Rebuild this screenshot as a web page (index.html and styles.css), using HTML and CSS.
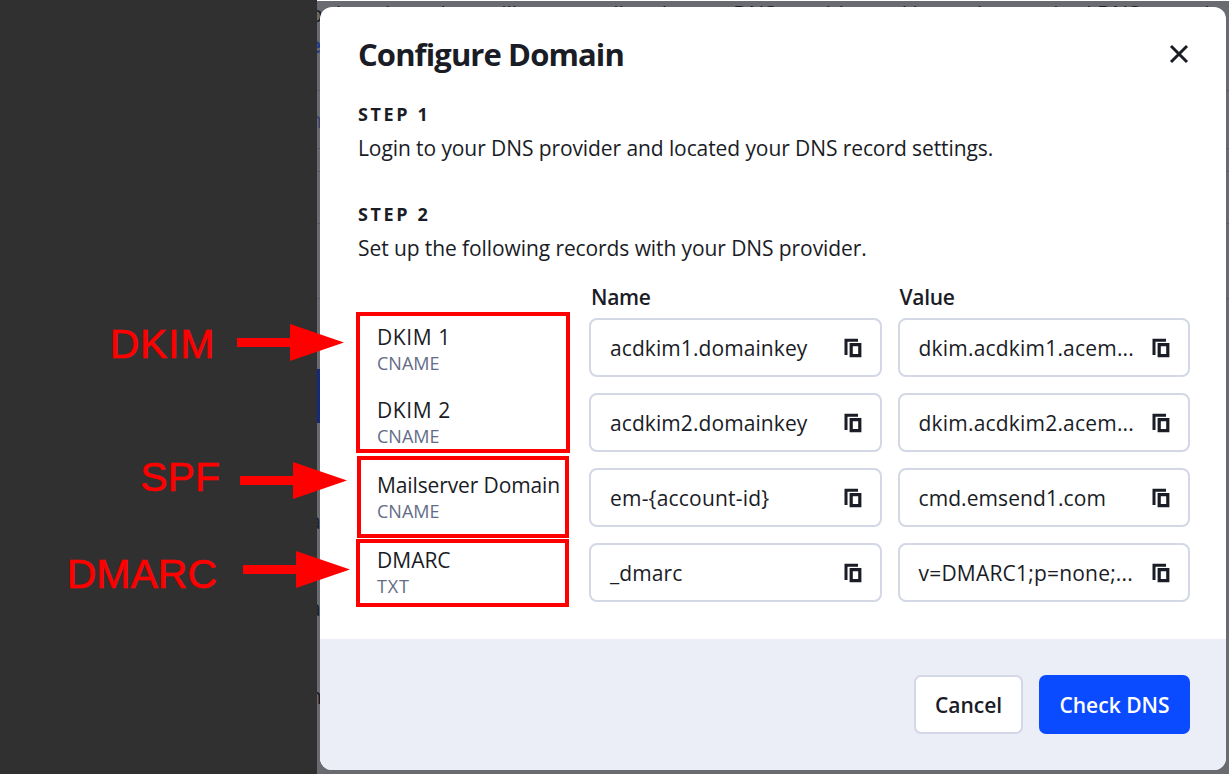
FILE: index.html
```html
<!DOCTYPE html>
<html lang="en">
<head>
    <meta charset="UTF-8">
    <meta name="viewport" content="width=device-width, initial-scale=1.0">
    <title>Configure Domain</title>
    <link rel="stylesheet" href="styles.css">
</head>
<body>
    <svg class="icon-defs" width="0" height="0">
        <symbol id="copy" viewBox="0 0 18 20">
            <path d="M2 17V2.2H14" fill="none" stroke="currentColor" stroke-width="3"/>
            <path d="M7.2 6.7h8.6v11H7.2z" fill="none" stroke="currentColor" stroke-width="3.2"/>
        </symbol>
        <symbol id="arrow" viewBox="0 0 107 37">
            <path d="M0 14h53V0l54 18.5L53 37V23H0z" fill="#f00"/>
        </symbol>
    </svg>

    <aside class="notes"></aside>

    <div class="backdrop">
        <div class="page-line">p domain and we will connect directly your DNS provider and input the required DNS records</div>
        <span class="page-text link">e</span>
        <span class="page-text muted">n</span>
        <i class="rule rule-1"></i>
        <i class="rule rule-2"></i>
        <i class="rule rule-3"></i>
        <i class="rule rule-4"></i>
        <i class="rule rule-5"></i>
        <i class="page-button"></i>
        <span class="page-text text-1">a</span>
        <span class="page-text text-2">a</span>
        <span class="page-text text-3">n</span>

        <div class="modal">
            <div class="modal-body">
                <div class="modal-header">
                    <h1>Configure Domain</h1>
                    <button class="close" aria-label="Close">
                        <svg width="20" height="20" viewBox="0 0 20 20">
                            <path d="M2 2l16 16M18 2L2 18" stroke="currentColor" stroke-width="3"/>
                        </svg>
                    </button>
                </div>

                <div class="step">
                    <h2>STEP 1</h2>
                    <p>Login to your DNS provider and located your DNS record settings.</p>
                </div>
                <div class="step">
                    <h2>STEP 2</h2>
                    <p>Set up the following records with your DNS provider.</p>
                </div>

                <div class="records">
                    <div class="column-title"></div>
                    <div class="column-title">Name</div>
                    <div class="column-title">Value</div>

                    <div class="record first"><div class="record-name dkim">DKIM 1</div><div class="record-type">CNAME</div></div>
                    <div class="field"><span>acdkim1.domainkey</span><svg class="copy"><use href="#copy"/></svg></div>
                    <div class="field"><span class="wide">dkim.acdkim1.acem...</span><svg class="copy"><use href="#copy"/></svg></div>

                    <div class="record"><div class="record-name dkim">DKIM 2</div><div class="record-type">CNAME</div></div>
                    <div class="field"><span>acdkim2.domainkey</span><svg class="copy"><use href="#copy"/></svg></div>
                    <div class="field"><span class="wide">dkim.acdkim2.acem...</span><svg class="copy"><use href="#copy"/></svg></div>

                    <div class="record"><div class="record-name mailserver">Mailserver Domain</div><div class="record-type">CNAME</div></div>
                    <div class="field"><span class="wide">em-{account-id}</span><svg class="copy"><use href="#copy"/></svg></div>
                    <div class="field"><span>cmd.emsend1.com</span><svg class="copy"><use href="#copy"/></svg></div>

                    <div class="record"><div class="record-name">DMARC</div><div class="record-type txt">TXT</div></div>
                    <div class="field"><span>_dmarc</span><svg class="copy"><use href="#copy"/></svg></div>
                    <div class="field"><span class="wide">v=DMARC1;p=none;...</span><svg class="copy"><use href="#copy"/></svg></div>
                </div>
            </div>

            <div class="modal-footer">
                <button class="btn cancel">Cancel</button>
                <button class="btn check">Check DNS</button>
            </div>
        </div>
    </div>

    <!-- Callouts drawn over the dialog -->
    <div class="box box-dkim"></div>
    <div class="box box-spf"></div>
    <div class="box box-dmarc"></div>
    <div class="callout callout-dkim"><span>DKIM</span><svg class="arrow"><use href="#arrow"/></svg></div>
    <div class="callout callout-spf"><span>SPF</span><svg class="arrow"><use href="#arrow"/></svg></div>
    <div class="callout callout-dmarc"><span>DMARC</span><svg class="arrow"><use href="#arrow"/></svg></div>
</body>
</html>
```
FILE: styles.css
```css
* {
    box-sizing: border-box;
}
body {
    margin: 0;
    height: 774px;
    display: flex;
    position: relative;
    overflow: hidden;
    font-family: "Open Sans", "Noto Sans", sans-serif;
    font-size: 21px;
    color: #1a1c26;
    background-color: #303030;
}
h1, h2, p {
    margin: 0;
}
button {
    font-family: inherit;
    cursor: pointer;
}
.icon-defs {
    position: absolute;
}
.notes {
    width: 317px;
    flex: none;
    background-color: #303030;
}
.backdrop {
    position: relative;
    flex: 1;
    overflow: hidden;
    padding: 6px 3px 4px;
    border-top: 1px solid #fff;
    background-color: #6a6b70;
}

/* Page behind the dialog */
.page-line {
    position: absolute;
    top: -1px;
    left: -7px;
    font-size: 21px;
    line-height: 28px;
    white-space: nowrap;
    color: #1c1d26;
}
.page-text {
    position: absolute;
    left: -8px;
    font-size: 21px;
    line-height: 28px;
    color: #1c1d26;
}
.link {
    top: 30px;
    color: #1c3a94;
    font-weight: 600;
}
.muted {
    top: 105px;
    color: #3a4570;
}
.text-1 {
    top: 506px;
}
.text-2 {
    top: 593px;
}
.text-3 {
    top: 681px;
}
.rule {
    position: absolute;
    left: 0;
    right: 0;
    height: 1px;
    background-color: #5a5b66;
}
.rule-1 { top: 89px; }
.rule-2 { top: 147px; }
.rule-3 { top: 170px; }
.rule-4 { top: 222px; }
.rule-5 { top: 297px; }
.page-button {
    position: absolute;
    top: 368px;
    left: 0;
    width: 40px;
    height: 54px;
    background-color: #17297a;
}

.modal {
    position: relative;
    height: 763px;
    display: flex;
    flex-direction: column;
    overflow: hidden;
    border-radius: 12px;
    background-color: #fff;
}
.modal-body {
    height: 632px;
    padding: 27px 36px 0 38px;
}
.modal-header {
    display: flex;
    justify-content: space-between;
    height: 63px;
}
h1 {
    font-size: 31px;
    line-height: 40px;
    font-weight: 700;
    letter-spacing: -0.9px;
}
.close {
    width: 20px;
    height: 20px;
    margin: 10px 1px 0 0;
    padding: 0;
    border: none;
    background: none;
    color: #1a1c26;
}
.close svg {
    display: block;
}
.step {
    height: 100px;
}
h2 {
    padding-top: 4px;
    font-size: 18px;
    line-height: 26px;
    font-weight: 700;
    letter-spacing: 2.6px;
}
.step p {
    padding-top: 6px;
    line-height: 30px;
    letter-spacing: -0.09px;
    white-space: nowrap;
}

.records {
    display: grid;
    grid-template-columns: 215px 292.5px 292.5px;
    grid-template-rows: 20px repeat(4, 59px);
    gap: 16px;
    margin-top: -15px;
}
.column-title {
    padding-left: 2px;
    font-weight: 600;
    line-height: 31px;
    letter-spacing: -0.3px;
}
.record {
    padding: 3px 0 0 19px;
}
.record.first {
    padding-top: 5px;
}
.record-name {
    line-height: 28px;
    white-space: nowrap;
}
.dkim {
    letter-spacing: 0.6px;
}
.mailserver {
    letter-spacing: -0.12px;
}
.record-type {
    font-size: 18px;
    line-height: 24px;
    color: #646b87;
}
.txt {
    letter-spacing: 0.8px;
}
.field {
    display: flex;
    align-items: center;
    justify-content: space-between;
    padding: 0 18px 0 19px;
    border: 2px solid #d3d7e6;
    border-radius: 8px;
    letter-spacing: 0.08px;
    white-space: nowrap;
}
.wide {
    letter-spacing: 0.2px;
}
.copy {
    width: 18px;
    height: 20px;
    flex: none;
}

.modal-footer {
    flex: 1;
    display: flex;
    justify-content: flex-end;
    gap: 16px;
    padding: 36px 36px 0;
    background-color: #ebeef7;
}
.btn {
    height: 59px;
    padding: 0;
    font-size: 21px;
    font-weight: 600;
    border-radius: 7px;
}
.cancel {
    width: 109px;
    border: 2px solid #d3d7e6;
    background-color: #fff;
    color: #1a1c26;
}
.check {
    width: 151px;
    border: none;
    background-color: #0a4bff;
    color: #fff;
}

.box {
    position: absolute;
    border: 4px solid #f00;
}
.box-dkim {
    left: 356px;
    top: 312px;
    width: 214px;
    height: 141px;
}
.box-spf {
    left: 357px;
    top: 456px;
    width: 212px;
    height: 82px;
}
.box-dmarc {
    left: 356px;
    top: 539px;
    width: 213px;
    height: 68px;
}
.callout {
    position: absolute;
    display: flex;
    justify-content: flex-end;
    width: 300px;
    height: 37px;
    color: #f00;
    font-family: "Liberation Sans", Arial, sans-serif;
    font-size: 41px;
    line-height: 37px;
    -webkit-text-stroke: 0.6px #f00;
}
.arrow {
    width: 107px;
    height: 37px;
    margin-left: 22px;
    -webkit-text-stroke: 0;
}
.callout-dkim {
    left: 44px;
    top: 324px;
}
.callout-dkim span {
    padding-top: 2px;
    letter-spacing: 0.7px;
}
.callout-spf {
    left: 47px;
    top: 462px;
}
.callout-spf span {
    margin: -3px -2px 0 0;
}
.callout-dmarc {
    left: 50px;
    top: 551px;
}
.callout-dmarc span {
    padding: 5px 4px 0 0;
}
```
